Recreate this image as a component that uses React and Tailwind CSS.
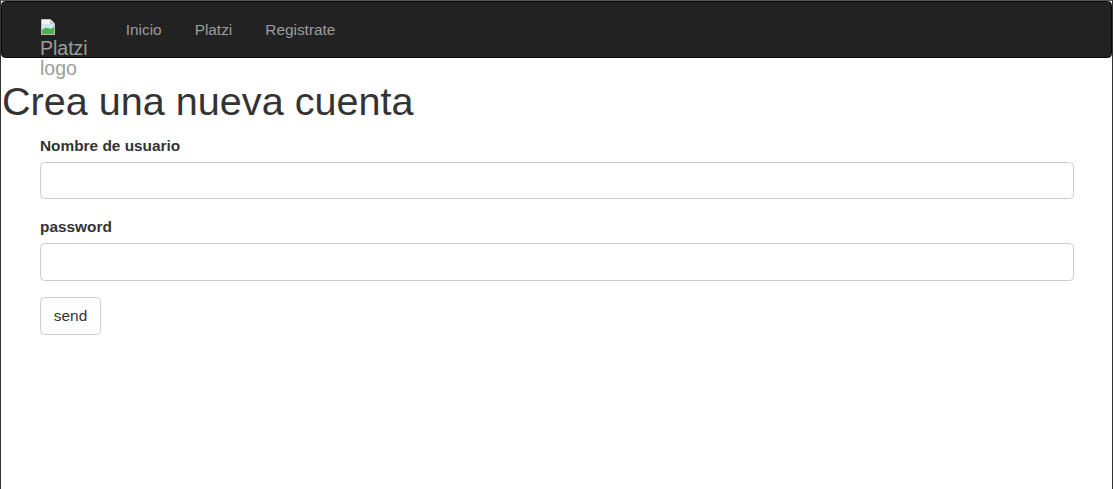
import React from "react";

function BrokenImage() {
  return (
    <svg width="16" height="16" viewBox="0 0 16 16" className="block">
      <path d="M1.5 0.5 H10.5 L14.5 4.5 V15.5 H1.5 Z" fill="#f4f4f4" stroke="#bdbdbd" />
      <path d="M10.5 0.5 V4.5 H14.5" fill="#e0e0e0" stroke="#bdbdbd" />
      <rect x="2" y="5" width="12" height="6" fill="#cfe6f7" />
      <path d="M2 15 L2 11 Q6 7 10 10 L14 8 L14 15 Z" fill="#4caf50" />
    </svg>
  );
}

export default function App() {
  return (
    <div className="w-[1113px] min-h-[489px] border-l border-r border-t border-l-[#333] border-r-[#333] border-t-[#555] bg-white">
      <div className="font-['Liberation_Sans',Arial,sans-serif]">
        <nav className="h-[57px] bg-[#222] border border-[#080808] rounded-[4.4px] flex items-start">
          <div className="ml-[38px] w-[69.2px] pt-[17px] text-[#9d9d9d] text-[19.5px] leading-[20px]">
            <BrokenImage />
            <div className="mt-[2.5px]">Platzi</div>
            <div>logo</div>
          </div>
          <ul className="flex">
            <li className="px-[16.5px] pt-[16.5px] text-[15.4px] leading-[22px] text-[#9d9d9d]">Inicio</li>
            <li className="px-[16.5px] pt-[16.5px] text-[15.4px] leading-[22px] text-[#9d9d9d]">Platzi</li>
            <li className="px-[16.5px] pt-[16.5px] text-[15.4px] leading-[22px] text-[#9d9d9d]">Registrate</li>
          </ul>
        </nav>

        <h1 className="mt-[22px] ml-[1px] mb-[11px] text-[39.6px] leading-[1.1] text-[#333] font-normal">
          Crea una nueva cuenta
        </h1>

        <form className="pl-[39px] pr-[38px]" onSubmit={(e) => e.preventDefault()}>
          <div className="mb-[16.5px]">
            <label className="block mb-[5.5px] text-[15.4px] leading-[22px] font-bold text-[#333]">
              Nombre de usuario
            </label>
            <input
              type="text"
              className="block w-full h-[37.4px] border border-[#ccc] rounded-[4.4px] bg-white outline-none"
            />
          </div>
          <div className="mb-[16.5px]">
            <label className="block mb-[5.5px] text-[15.4px] leading-[22px] font-bold text-[#333]">
              password
            </label>
            <input
              type="password"
              className="block w-full h-[37.4px] border border-[#ccc] rounded-[4.4px] bg-white outline-none"
            />
          </div>
          <button
            type="submit"
            className="h-[37.4px] w-[61px] border border-[#ccc] rounded-[4.4px] bg-white text-[15.4px] text-[#333] leading-[22px]"
          >
            send
          </button>
        </form>
      </div>
    </div>
  );
}
